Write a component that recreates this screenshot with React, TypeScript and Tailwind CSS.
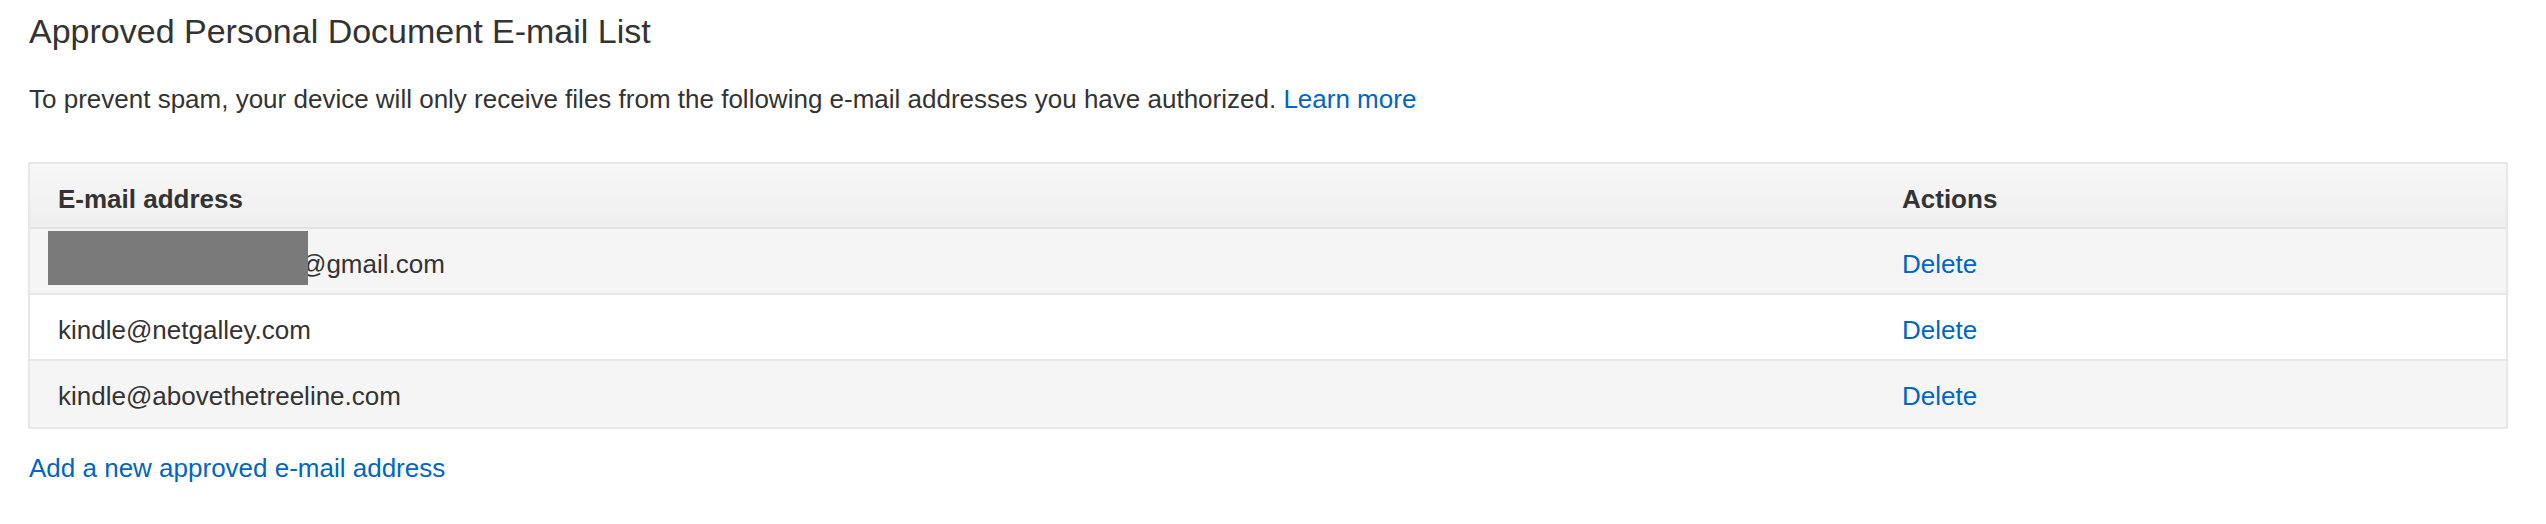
import React from "react";

const rows = [
  { email: "@gmail.com", redacted: true, bg: "bg-[#f5f5f5]" },
  { email: "kindle@netgalley.com", redacted: false, bg: "bg-white" },
  { email: "kindle@abovethetreeline.com", redacted: false, bg: "bg-[#f5f5f5]" },
];

export default function App() {
  return (
    <div className="w-[2546px] h-[524px] bg-white text-[#333333] font-['Liberation_Sans',Arial,sans-serif] pl-[29px] pt-[11px]">
      <h1 className="text-[34px] leading-[40px] font-normal">Approved Personal Document E-mail List</h1>
      <p className="mt-[33px] text-[26px] leading-[30px]">
        To prevent spam, your device will only receive files from the following e-mail addresses you have authorized.{" "}
        <a className="text-[#0066c0] cursor-pointer">Learn more</a>
      </p>
      <div className="mt-[48px] -ml-[1px] w-[2480px] border-2 border-[#e7e7e7]">
        <div className="grid grid-cols-[1844px_1fr] bg-gradient-to-b from-[#f7f7f7] to-[#efefef] border-b-2 border-[#e3e3e3] h-[65px]">
          <div className="pl-[28px] pt-[20px] text-[26px] leading-[30px] font-bold">E-mail address</div>
          <div className="pl-[28px] pt-[20px] text-[26px] leading-[30px] font-bold">Actions</div>
        </div>
        {rows.map((r, i) => (
          <div
            key={i}
            className={`grid grid-cols-[1844px_1fr] ${r.bg} h-[66px] ${i < rows.length - 1 ? "border-b-2 border-[#e7e7e7]" : ""}`}
          >
            <div className="relative pl-[28px] pt-[20px] text-[26px] leading-[30px]">
              {r.redacted ? (
                <>
                  <span className="inline-block w-[242px]" />
                  {r.email}
                  <span className="absolute left-[18px] top-[2px] w-[260px] h-[54px] bg-[#7a7a7a]" />
                </>
              ) : (
                r.email
              )}
            </div>
            <div className="pl-[28px] pt-[20px] text-[26px] leading-[30px]">
              <a className="text-[#0066c0] cursor-pointer">Delete</a>
            </div>
          </div>
        ))}
      </div>
      <div className="mt-[24px] text-[26px] leading-[30px]">
        <a className="text-[#0066c0] cursor-pointer">Add a new approved e-mail address</a>
      </div>
    </div>
  );
}
